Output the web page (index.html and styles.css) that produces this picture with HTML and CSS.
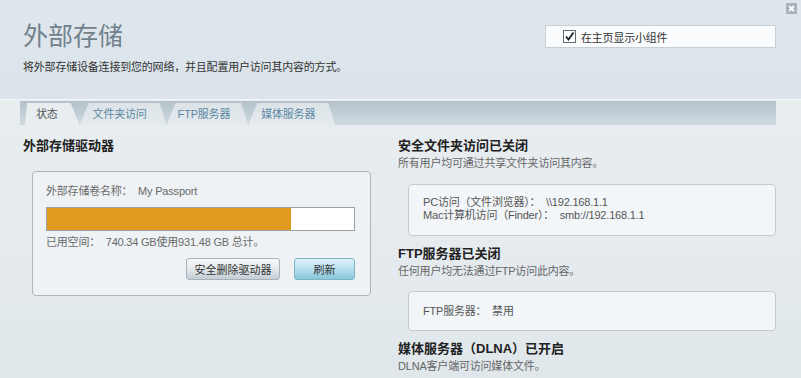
FILE: index.html
```html
<!DOCTYPE html>
<html lang="zh-CN">
<head>
    <meta charset="UTF-8">
    <title>外部存储</title>
    <link rel="stylesheet" href="styles.css">
</head>
<body>

<div class="page">
    <span class="close-btn" title="关闭">
        <svg width="11" height="11" viewBox="0 0 11 11">
            <rect x="0" y="0" width="11" height="11" rx="1" fill="#a7b2b9"/>
            <path d="M3 3 L8 8 M8 3 L3 8" stroke="#ffffff" stroke-width="1.8"/>
        </svg>
    </span>

    <header class="top">
        <div class="intro">
            <h1>外部存储</h1>
            <p>将外部存储设备连接到您的网络，并且配置用户访问其内容的方式。</p>
        </div>
        <label class="widget-toggle">
            <span class="check">
                <svg width="13" height="13" viewBox="0 0 13 13">
                    <rect x="0.5" y="0.5" width="12" height="12" fill="#ffffff" stroke="#5f6b73"/>
                    <path d="M3 6.5 L5.5 9.5 L10.5 2.5" fill="none" stroke="#1c2329" stroke-width="1.9"/>
                </svg>
            </span>
            在主页显示小组件
        </label>
    </header>

    <div class="panel">
        <nav class="tabs">
            <a class="tab tab-first active">状态</a>
            <a class="tab">文件夹访问</a>
            <a class="tab tab-narrow">FTP服务器</a>
            <a class="tab">媒体服务器</a>
        </nav>

        <div class="columns">
            <section class="col-left">
                <h2>外部存储驱动器</h2>
                <div class="card">
                    <div class="label">外部存储卷名称：&nbsp; My Passport</div>
                    <div class="usage-bar">
                        <div class="usage-fill" style="width: 79.5%"></div>
                    </div>
                    <div class="label used">已用空间：&nbsp; 740.34 GB使用931.48 GB 总计。</div>
                    <div class="actions">
                        <button class="btn">安全删除驱动器</button>
                        <button class="btn btn-blue">刷新</button>
                    </div>
                </div>
            </section>

            <section class="col-right">
                <h2>安全文件夹访问已关闭</h2>
                <p class="note">所有用户均可通过共享文件夹访问其内容。</p>
                <div class="info-box box-access">
                    PC访问（文件浏览器）：&nbsp; \\192.168.1.1<br>
                    Mac计算机访问（Finder）：&nbsp; smb://192.168.1.1
                </div>

                <h2>FTP服务器已关闭</h2>
                <p class="note">任何用户均无法通过FTP访问此内容。</p>
                <div class="info-box box-ftp">
                    FTP服务器：&nbsp; 禁用
                </div>

                <h2>媒体服务器（DLNA）已开启</h2>
                <p class="note">DLNA客户端可访问媒体文件。</p>
            </section>
        </div>
    </div>
</div>

</body>
</html>
```

FILE: styles.css
```css
body {
    margin: 0;
    font-family: "Liberation Sans", "Noto Sans CJK SC", sans-serif;
    font-size: 11px;
    letter-spacing: -0.2px;
    color: #333;
    background: #dde6ec;
}
.page {
    position: relative;
    width: 801px;
    height: 378px;
    overflow: hidden;
}
.close-btn {
    position: absolute;
    top: 3px;
    right: 4px;
    line-height: 0;
}

/* Header */
.top {
    display: flex;
    justify-content: space-between;
    align-items: flex-start;
    height: 99px;
    padding: 0 25px 0 23px;
    background: linear-gradient(#dfe7ed, #dbe4ea);
}
.intro h1 {
    margin: 20px 0 0;
    font-size: 25px;
    line-height: 32px;
    font-weight: normal;
    letter-spacing: 0;
    color: #70818c;
}
.intro p {
    margin: 7px 0 0;
    line-height: 16px;
    color: #333;
}
.widget-toggle {
    display: flex;
    align-items: center;
    gap: 5px;
    margin-top: 25px;
    width: 212px;
    height: 21px;
    padding-left: 17px;
    background: #fafbfc;
    border: 1px solid #c6cfd5;
    color: #333;
}
.check {
    line-height: 0;
}

/* Tabs */
.panel {
    border-top: 1px solid #f1f5f7;
    padding-top: 1px;
    height: 277px;
    background: linear-gradient(#e8edf0, #e4eaee 60%, #e0e7eb);
}
.tabs {
    display: flex;
    align-items: flex-end;
    height: 24px;
    margin: 0 25px 0 20px;
    padding-left: 5px;
    background: linear-gradient(#b3c1c9, #cfdae0);
}
.tab {
    height: 22px;
    line-height: 22px;
    padding: 0 20px 0 13px;
    color: #5a87a3;
    background: linear-gradient(#dce3e7, #e4eaed);
    clip-path: polygon(0 100%, 9px 0, calc(100% - 7px) 0, 100% 100%);
    cursor: pointer;
}
.tab-first {
    padding: 0 22px 0 11px;
    clip-path: polygon(0 100%, 2px 0, calc(100% - 9px) 0, 100% 100%);
}
.tab-narrow {
    padding: 0 18px 0 11px;
}
.tab.active {
    color: #555;
    background: #e8edf0;
}

/* Columns */
.columns {
    display: flex;
    padding: 12px 25px 0 23px;
}
h2 {
    margin: 0;
    font-size: 13px;
    line-height: 18px;
    font-weight: bold;
    letter-spacing: 0;
    color: #222;
}
.col-left {
    width: 376px;
}
.col-left h2 {
    margin-bottom: 16px;
}
.col-right {
    flex: 1;
}

/* Storage card */
.card {
    margin-left: 9px;
    width: 309px;
    padding: 11px 15px 15px 13px;
    background: #eef2f4;
    border: 1px solid #adb6bc;
    border-radius: 4px;
}
.label {
    line-height: 16px;
    color: #6a6a6a;
}
.usage-bar {
    margin: 8px 0 0;
    height: 22px;
    background: #fff;
    border: 1px solid #9aa2a7;
}
.usage-fill {
    height: 100%;
    background: #e09a1e;
}
.used {
    margin-top: 3px;
}
.actions {
    display: flex;
    justify-content: flex-end;
    gap: 14px;
    margin-top: 8px;
}
.btn {
    height: 22px;
    width: 94px;
    padding: 0;
    font-family: "Liberation Sans", "Noto Sans CJK SC", sans-serif;
    font-size: 11px;
    color: #333;
    background: linear-gradient(#f8fafb, #e2e8eb 50%, #c2ced4);
    border: 1px solid #a8b2b8;
    border-radius: 3px;
    cursor: pointer;
}
.btn-blue {
    width: 61px;
    background: linear-gradient(#dff1f7, #b6def0 50%, #8ac8db);
    border-color: #7fb4c6;
}

/* Right column */
.note {
    margin: 0;
    line-height: 16px;
    color: #666;
}
.info-box {
    margin: 13px 0 9px 10px;
    width: 352px;
    padding: 0 0 0 14px;
    background: #f3f6f8;
    border: 1px solid #c3cbd0;
    border-radius: 4px;
    color: #555;
    line-height: 13px;
}
.box-access {
    height: 26px;
    padding-top: 11px;
    padding-bottom: 13px;
}
.box-ftp {
    margin-top: 12px;
    height: 38px;
    line-height: 38px;
}
```
